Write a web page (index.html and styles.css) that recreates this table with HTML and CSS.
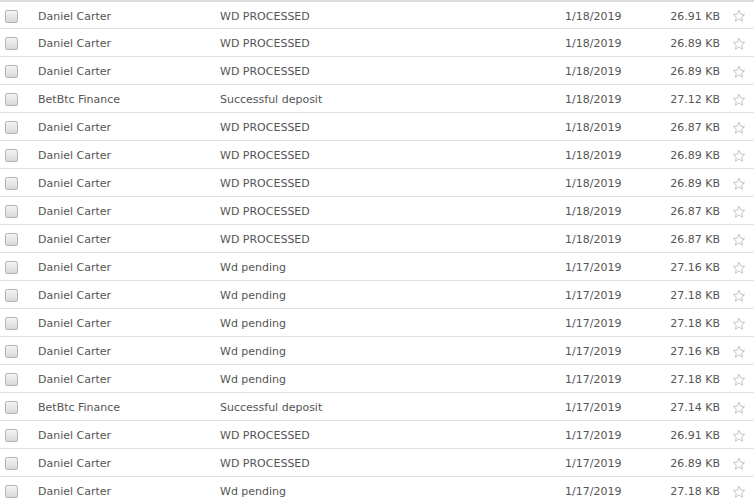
FILE: index.html
```html
<!DOCTYPE html>
<html lang="en">
<head>
    <meta charset="UTF-8">
    <title>Inbox</title>
    <link rel="stylesheet" href="styles.css">
</head>
<body>
    <svg width="0" height="0" class="defs">
        <symbol id="star" viewBox="0 0 14 14">
            <path d="M7 1.2 L8.7 5.1 L12.8 5.4 L9.7 8.1 L10.6 12.2 L7 10 L3.4 12.2 L4.3 8.1 L1.2 5.4 L5.3 5.1 Z" fill="none" stroke="#c6c6c6" stroke-width="1" stroke-linejoin="round"/>
        </symbol>
    </svg>
    <div class="mail-list">
        <div class="mail-row"><span class="check"></span><span class="from">Daniel Carter</span><span class="subject">WD PROCESSED</span><span class="date">1/18/2019</span><span class="size">26.91 KB</span><svg class="star"><use href="#star"/></svg></div>
        <div class="mail-row"><span class="check"></span><span class="from">Daniel Carter</span><span class="subject">WD PROCESSED</span><span class="date">1/18/2019</span><span class="size">26.89 KB</span><svg class="star"><use href="#star"/></svg></div>
        <div class="mail-row"><span class="check"></span><span class="from">Daniel Carter</span><span class="subject">WD PROCESSED</span><span class="date">1/18/2019</span><span class="size">26.89 KB</span><svg class="star"><use href="#star"/></svg></div>
        <div class="mail-row"><span class="check"></span><span class="from">BetBtc Finance</span><span class="subject">Successful deposit</span><span class="date">1/18/2019</span><span class="size">27.12 KB</span><svg class="star"><use href="#star"/></svg></div>
        <div class="mail-row"><span class="check"></span><span class="from">Daniel Carter</span><span class="subject">WD PROCESSED</span><span class="date">1/18/2019</span><span class="size">26.87 KB</span><svg class="star"><use href="#star"/></svg></div>
        <div class="mail-row"><span class="check"></span><span class="from">Daniel Carter</span><span class="subject">WD PROCESSED</span><span class="date">1/18/2019</span><span class="size">26.89 KB</span><svg class="star"><use href="#star"/></svg></div>
        <div class="mail-row"><span class="check"></span><span class="from">Daniel Carter</span><span class="subject">WD PROCESSED</span><span class="date">1/18/2019</span><span class="size">26.89 KB</span><svg class="star"><use href="#star"/></svg></div>
        <div class="mail-row"><span class="check"></span><span class="from">Daniel Carter</span><span class="subject">WD PROCESSED</span><span class="date">1/18/2019</span><span class="size">26.87 KB</span><svg class="star"><use href="#star"/></svg></div>
        <div class="mail-row"><span class="check"></span><span class="from">Daniel Carter</span><span class="subject">WD PROCESSED</span><span class="date">1/18/2019</span><span class="size">26.87 KB</span><svg class="star"><use href="#star"/></svg></div>
        <div class="mail-row"><span class="check"></span><span class="from">Daniel Carter</span><span class="subject">Wd pending</span><span class="date">1/17/2019</span><span class="size">27.16 KB</span><svg class="star"><use href="#star"/></svg></div>
        <div class="mail-row"><span class="check"></span><span class="from">Daniel Carter</span><span class="subject">Wd pending</span><span class="date">1/17/2019</span><span class="size">27.18 KB</span><svg class="star"><use href="#star"/></svg></div>
        <div class="mail-row"><span class="check"></span><span class="from">Daniel Carter</span><span class="subject">Wd pending</span><span class="date">1/17/2019</span><span class="size">27.18 KB</span><svg class="star"><use href="#star"/></svg></div>
        <div class="mail-row"><span class="check"></span><span class="from">Daniel Carter</span><span class="subject">Wd pending</span><span class="date">1/17/2019</span><span class="size">27.16 KB</span><svg class="star"><use href="#star"/></svg></div>
        <div class="mail-row"><span class="check"></span><span class="from">Daniel Carter</span><span class="subject">Wd pending</span><span class="date">1/17/2019</span><span class="size">27.18 KB</span><svg class="star"><use href="#star"/></svg></div>
        <div class="mail-row"><span class="check"></span><span class="from">BetBtc Finance</span><span class="subject">Successful deposit</span><span class="date">1/17/2019</span><span class="size">27.14 KB</span><svg class="star"><use href="#star"/></svg></div>
        <div class="mail-row"><span class="check"></span><span class="from">Daniel Carter</span><span class="subject">WD PROCESSED</span><span class="date">1/17/2019</span><span class="size">26.91 KB</span><svg class="star"><use href="#star"/></svg></div>
        <div class="mail-row"><span class="check"></span><span class="from">Daniel Carter</span><span class="subject">WD PROCESSED</span><span class="date">1/17/2019</span><span class="size">26.89 KB</span><svg class="star"><use href="#star"/></svg></div>
        <div class="mail-row"><span class="check"></span><span class="from">Daniel Carter</span><span class="subject">Wd pending</span><span class="date">1/17/2019</span><span class="size">27.18 KB</span><svg class="star"><use href="#star"/></svg></div>
    </div>
</body>
</html>
```
FILE: styles.css
```css
body {
    margin: 0;
    background-color: white;
    font-family: "DejaVu Sans", Verdana, sans-serif;
    font-size: 11px;
    color: #555;
    overflow: hidden;
}
.defs {
    position: absolute;
}
.mail-list {
    border-top: 2px solid #dcdcdc;
}
.mail-row {
    display: grid;
    grid-template-columns: 38px 182px 345px 90px 65px 34px;
    align-items: center;
    height: 25px;
    padding-top: 2px;
    border-bottom: 1px solid #e2e2e2;
}
.mail-row:first-child {
    height: 24px;
}
.check {
    width: 11px;
    height: 11px;
    margin-left: 5px;
    border: 1px solid #b5b5b5;
    border-radius: 2px;
    background: linear-gradient(#f4f4f4, #d9d9d9);
}
.size {
    text-align: right;
}
.star {
    width: 14px;
    height: 14px;
    margin-left: 12px;
}
```
